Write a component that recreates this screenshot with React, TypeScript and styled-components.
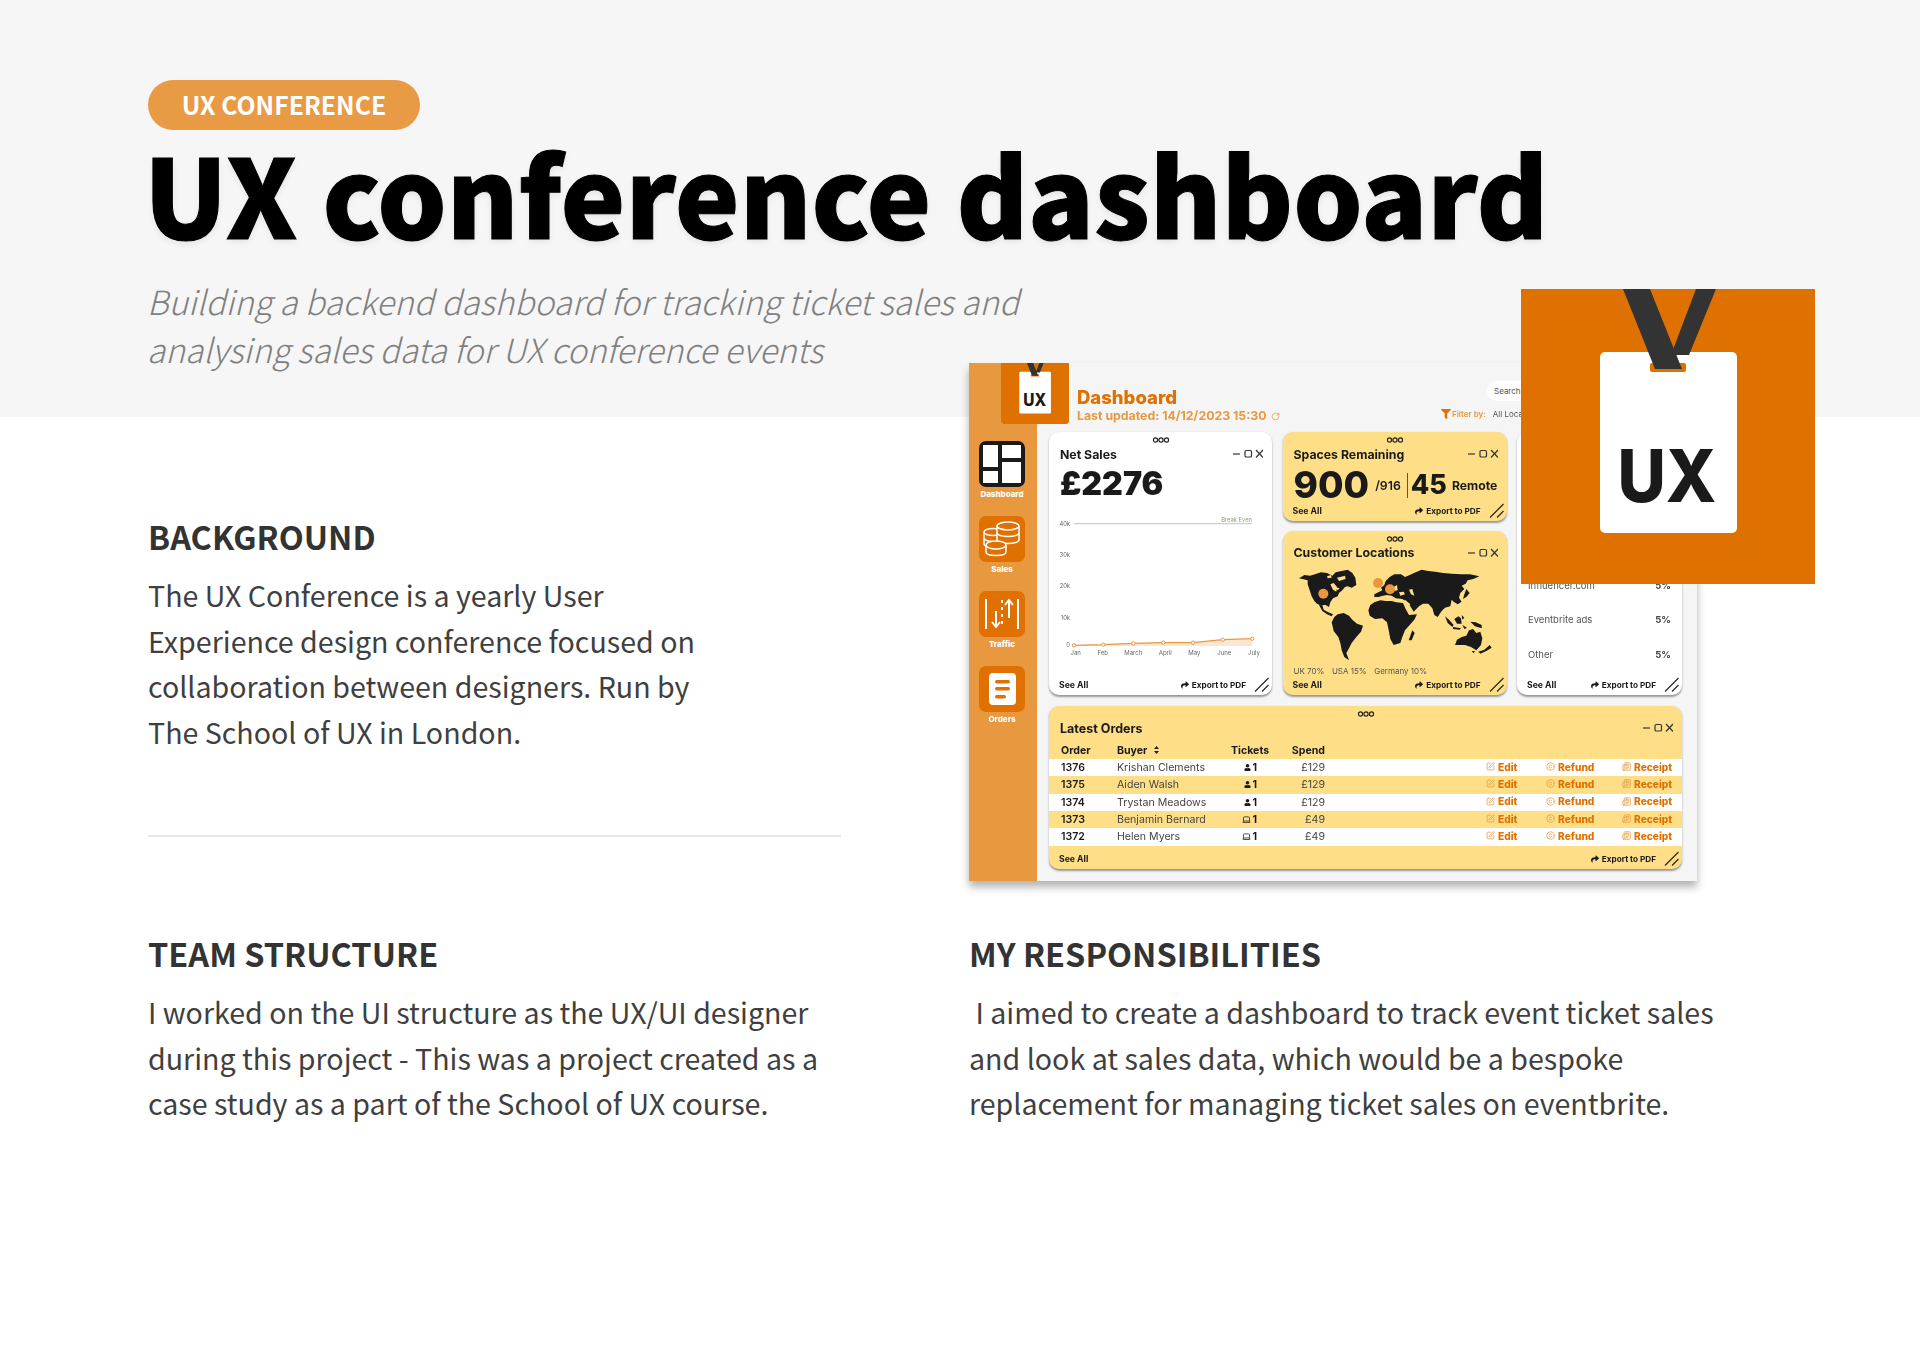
import React from "react";
import styled, { createGlobalStyle } from "styled-components";
import { SquarePen, Copyright, Newspaper, Laptop, RotateCw } from "lucide-react";
import { FaShare, FaFilter, FaUser } from "react-icons/fa";

const Global = createGlobalStyle`
  html, body { margin: 0; padding: 0; background: #fff; }
  * { box-sizing: border-box; }
`;
const SANS = `"Noto Sans CJK SC", "Open Sans", sans-serif`;
const UI = `Inter, "Liberation Sans", sans-serif`;

const Page = styled.div`width: 1920px; height: 1357px; overflow: hidden; font-family: ${SANS}; color: #333;`;
const Hero = styled.header`height: 417px; background: #f6f6f6; padding: 80px 0 0 148px;`;
const Tag = styled.div`
  width: 272px; height: 50px; border-radius: 25px; background: #e89a45; color: #fff; padding-bottom: 2px;
  display: flex; align-items: center; justify-content: center; font-size: 24.8px; font-weight: 700; line-height: 1;
`;
const Title = styled.h1`
  margin: 1px 0 0 -4px; font-size: 109px; line-height: 122px; font-weight: 900; color: #000; white-space: nowrap;
  -webkit-text-stroke: 1px #000; text-shadow: 0 3px 6px rgba(0,0,0,.08);
`;
const Sub = styled.p`
  margin: 24px 0 0 -1px; font-size: 33.3px; line-height: 48px; font-style: italic; font-weight: 300; color: #808080; white-space: nowrap;
`;
const Body = styled.main`
  display: grid; grid-template-columns: 693px 800px; column-gap: 128px; padding-left: 148px;
  grid-template-rows: 514px auto;
`;
const Section = styled.section<{ $pad?: number }>`padding-top: ${(p) => p.$pad ?? 0}px;`;
const Heading = styled.h2`margin: 0; font-size: 32.5px; line-height: 44px; font-weight: 700; color: #333;`;
const Text = styled.p<{ $w: number }>`
  margin: 14px 0 0; font-size: 28.6px; line-height: 45.6px; font-weight: 400; color: #3f3f3f; max-width: ${(p) => p.$w}px;
`;
const Divider = styled.hr`margin: 81px 0 0; border: 0; height: 2px; background: #e8e8e8;`;

const DashWrap = styled.div`position: relative; margin-top: -54px; height: 518px;`;
const Shell = styled.div`
  position: relative; width: 728px; height: 518px; display: flex; background: #f5f5f5;
  box-shadow: 0 6px 8px rgba(0,0,0,.3); filter: blur(.35px); font-family: ${UI}; color: #1a1a1a;
`;
const Side = styled.nav`
  width: 68px; background: #e8983f; display: flex; flex-direction: column; align-items: center; padding: 78px 2px 0 0;
`;
const SideItem = styled.div`width: 46px; height: 75px; display: flex; flex-direction: column; align-items: center;`;
const SideBox = styled.div<{ $dark?: boolean }>`
  width: 46px; height: 46px; border-radius: 7px; background: ${(p) => (p.$dark ? "#1a1a1a" : "#e07000")};
  display: flex; align-items: center; justify-content: center;
`;
const SideLabel = styled.span`font-size: 8px; font-weight: 800; color: #fff; margin-top: 2px; line-height: 10px;`;
const LogoBox = styled.div`
  position: absolute; left: 32px; top: 0; width: 68px; height: 61px; background: #e07000; border-radius: 0 0 4px 4px; overflow: hidden;
`;
const Main = styled.div`flex: 1; display: flex; flex-direction: column; padding: 0 15px 12px 12px; min-width: 0;`;
const Top = styled.div`height: 69px; display: flex; justify-content: space-between; padding-left: 28px;`;
const TitleBlock = styled.div`padding-top: 25px;`;
const DashTitle = styled.div`font-size: 18.5px; line-height: 18px; font-weight: 800; color: #e07000;`;
const Updated = styled.div`
  font-size: 12.3px; line-height: 14px; font-weight: 700; color: #e8983f; margin-top: 3px; display: flex; align-items: center; gap: 4px; white-space: nowrap;
`;
const Tools = styled.div`width: 241px; padding-top: 18px; display: flex; flex-direction: column; align-items: flex-start;`;
const SearchPill = styled.div`
  margin-left: 46px; height: 20px; width: 100px; border-radius: 10px; background: #fff; font-size: 8px; color: #555; padding: 0 7px; display: flex; align-items: center;
`;
const FilterRow = styled.div`display: flex; align-items: center; gap: 7px; margin-top: 8px; font-size: 8px; color: #555; white-space: nowrap;`;
const FilterLabel = styled.span`display: flex; align-items: center; gap: 1px; color: #e8983f; font-weight: 600;`;

const Cards = styled.div`display: grid; grid-template-columns: 223px 224px 165px; column-gap: 10.5px; height: 263px;`;
const Stack = styled.div`display: flex; flex-direction: column; gap: 10px;`;
const Card = styled.div<{ $yellow?: boolean; $h?: number }>`
  position: relative; display: flex; flex-direction: column; border-radius: 10px; padding: 14px 0 2.5px;
  background: ${(p) => (p.$yellow ? "#fedf87" : "#fff")};
  box-shadow: 0 1.5px 2px rgba(0,0,0,.38);
  ${(p) => (p.$h ? `height: ${p.$h}px;` : "")}
`;
const Grip = styled.svg`position: absolute; top: 5px; left: 50%; transform: translateX(-50%);`;
const CardHead = styled.div`display: flex; justify-content: space-between; align-items: center; padding: 0 9px 0 11px; height: 16px;`;
const CardTitle = styled.div`font-size: 12.3px; font-weight: 700; white-space: nowrap;`;
const Amount = styled.div`font-size: 32.2px; line-height: 34px; font-weight: 900; padding-left: 11px; margin-top: 5px;`;
const ChartSvg = styled.svg`display: block; margin-top: 14px; font-family: ${UI};`;
const Foot = styled.div`
  margin-top: auto; height: 16px; display: flex; align-items: center; padding: 0 3px 0 10px; font-size: 8.7px; font-weight: 700; white-space: nowrap;
`;
const Export = styled.span`margin-left: auto; display: flex; align-items: center; gap: 3px; font-size: 8.2px;`;
const Resize = styled.svg`margin-left: 8px; flex: none;`;
const Numbers = styled.div`display: flex; align-items: center; padding: 0 0 0 11px; margin-top: 8px; height: 30px;`;
const Big = styled.span`font-size: 37px; line-height: 30px; font-weight: 800;`;
const Of = styled.span`font-size: 12.3px; font-weight: 600; margin-left: 6px;`;
const Split = styled.span`width: 1px; height: 25px; background: #555; margin: 0 3px 0 6px;`;
const Mid = styled.span`font-size: 27px; line-height: 30px; font-weight: 800;`;
const Remote = styled.span`font-size: 12.2px; font-weight: 700; margin-left: 5px;`;
const MapSvg = styled.svg`display: block; margin: 4px 0 0 12px; flex: none;`;
const Legend = styled.div`display: flex; gap: 7.5px; padding-left: 11px; font-size: 8px; line-height: 12px; color: #555; white-space: nowrap;`;
const Sources = styled.div`flex: 1; display: flex; flex-direction: column; justify-content: flex-end; gap: 14.5px; padding: 0 11px 12px;`;
const Source = styled.div`display: flex; justify-content: space-between; font-size: 9.5px; height: 20px; line-height: 20px; color: #555;`;
const Pct = styled.span`font-weight: 700; color: #444;`;

const Orders = styled(Card)`margin-top: 11px; height: 163px; padding: 14px 0 2.5px;`;
const OrdersTitle = styled.div`font-size: 12.5px; font-weight: 700;`;
const Row = styled.div<{ $fill?: string; $head?: boolean }>`
  display: grid; grid-template-columns: 56px 114px 50px 44px 161px 60px 76px 1fr; align-items: center; padding-left: 12px;
  height: ${(p) => (p.$head ? 14 : 17.33)}px; background: ${(p) => p.$fill ?? "transparent"}; font-size: 10.6px;
  ${(p) => (p.$head ? "font-weight: 700; margin-top: 7px; margin-bottom: 2px;" : "")}
`;
const OrderNo = styled.span`font-weight: 600;`;
const Buyer = styled.span`color: #444; white-space: nowrap;`;
const SortIcon = styled.svg`margin-left: 7px;`;
const Tickets = styled.span`display: flex; align-items: center; justify-content: flex-end; padding-right: 24px; gap: 1px; font-weight: 700;`;
const Spend = styled.span`text-align: right; color: #444;`;
const Act = styled.span`display: flex; align-items: center; gap: 3px; margin-bottom: 2px; color: #e07000; font-weight: 800; font-size: 10.2px; svg { color: #e8983f; flex: none; }`;
const HeadSpend = styled.span`text-align: right;`;
const BuyerHead = styled.span`display: flex; align-items: center;`;

const Tile = styled.div`position: absolute; left: 552px; top: -74px; width: 294px; height: 295px; z-index: 2;`;
const LogoSvg = styled.svg`display: block; font-family: ${UI};`;

const Logo = ({ w, h, vb }: { w: number; h: number; vb: string }) => (
  <LogoSvg width={w} height={h} viewBox={vb}>
    <rect x="0" y="-40" width="294" height="340" fill="#df7100" />
    <rect x="79" y="63" width="137" height="181" rx="5" fill="#fff" />
    <polygon points="175,0 195,0 168,66 150,66" fill="#333" />
    <rect x="129" y="74" width="36" height="9" rx="2" fill="#df7100" />
    <polygon points="102,0 129,0 161,80 134,80" fill="#333" />
    <text x="146" y="213" textAnchor="middle" fontSize="73" fontWeight="800" fill="#1a1a1a" textLength="99" lengthAdjust="spacingAndGlyphs">UX</text>
  </LogoSvg>
);
const Dots = () => (
  <Grip width="17" height="6" viewBox="0 0 17 6" fill="none" stroke="#222" strokeWidth="1.2">
    <circle cx="3" cy="3" r="2.1" /><circle cx="8.5" cy="3" r="2.1" /><circle cx="14" cy="3" r="2.1" />
  </Grip>
);
const Win = () => (
  <svg width="30" height="10" viewBox="0 0 30 10" fill="none" stroke="#333" strokeWidth="1.2">
    <path d="M0 5h7" /><rect x="12" y="1.5" width="6.5" height="6.5" rx="1.3" /><path d="M23 1l7 7.5M30 1l-7 7.5" />
  </svg>
);
const Footer = () => (
  <Foot>
    See All
    <Export><FaShare size={8} />Export to PDF</Export>
    <Resize width="15" height="15" viewBox="0 0 15 15" fill="none" stroke="#222" strokeWidth="1.1">
      <path d="M1 14.5 14.5 1M8 14.5l6.5-6.5" />
    </Resize>
  </Foot>
);

const months = [[26.7, "Jan"], [53.7, "Feb"], [84.3, "March"], [116.3, "April"], [145.3, "May"], [175.3, "June"], [205, "July"]] as const;
const pts = [[25, 130.3], [54.3, 129.7], [84.3, 128.3], [114.3, 127.7], [144, 127.7], [173.7, 124.7], [203.3, 123.7]];
const Chart = () => (
  <ChartSvg width="223" height="150" viewBox="0 0 223 150">
    {[[8.7, "40k"], [40, "30k"], [71.3, "20k"], [102.7, "10k"], [130.3, "0"]].map(([y, t]) => (
      <text key={t} x="21" y={Number(y) + 2} textAnchor="end" fontSize="5.8" fill="#666">{t}</text>
    ))}
    <line x1="25" y1="8.7" x2="203" y2="8.7" stroke="#bccaa6" strokeWidth="1" />
    <text x="203" y="6.5" textAnchor="end" fontSize="5.8" fill="#8aa070">Break Even</text>
    <polygon points={`25,130.3 ${pts.map((p) => p.join(",")).join(" ")} 203.3,131 25,131`} fill="#fbe6d2" />
    <polyline points={pts.map((p) => p.join(",")).join(" ")} fill="none" stroke="#e8983f" strokeWidth="1.2" />
    {pts.map(([x, y]) => <circle key={x} cx={x} cy={y} r="1.7" fill="#fff" stroke="#e8983f" strokeWidth="1" />)}
    {months.map(([x, t]) => <text key={t} x={x} y="140" textAnchor="middle" fontSize="6" fill="#666">{t}</text>)}
  </ChartSvg>
);
const land = [
  // North America with Greenland and Arctic islands
  "M12 40 28 30 45 32 60 28 78 22 96 24 112 32 122 22 140 18 158 14 172 24 181 38 184 60 170 68 158 64 150 66 142 76 132 84 128 94 114 100 106 112 102 126 92 120 78 120 66 116 58 108 50 94 44 76 38 58 38 46 22 42Z",
  // Central America
  "M70 116 82 120 86 134 100 142 114 148 110 154 96 148 82 138Z",
  // South America
  "M110 172 118 156 128 148 146 144 162 152 172 164 186 176 204 182 198 200 184 216 170 234 162 250 154 264 162 286 148 276 140 256 136 234 130 216 116 198Z",
  // Eurasia
  "M238 88 250 82 262 76 258 68 268 60 272 48 284 36 298 28 318 28 330 36 344 30 362 22 380 14 400 18 420 20 445 24 470 26 500 28 525 28 553 34 535 42 518 46 512 56 500 62 508 72 496 84 492 98 500 110 488 118 476 110 470 104 466 124 450 128 440 138 428 156 418 150 412 130 400 116 384 116 372 124 356 140 346 124 336 112 322 102 302 100 290 92 276 90 264 92 250 96 238 96Z",
  // Arabia notch + Africa
  "M220 136 226 120 238 112 256 106 272 108 290 108 304 112 324 114 332 132 342 150 366 148 358 164 344 180 330 196 322 216 316 234 296 240 286 222 282 200 276 172 262 160 240 162 224 152Z",
  // Madagascar
  "M352 196 359 204 350 226 341 226Z",
  // Indonesia & Philippines
  "M450 154 462 164 476 180 472 186 458 174ZM478 162 490 154 498 160 500 176 486 176ZM526 170 542 172 560 180 560 190 540 184ZM502 180 516 188 508 192ZM474 186 498 190 494 194 474 192ZM500 150 508 158 502 164Z",
  // Australia
  "M480 240 486 224 500 216 514 212 522 196 534 192 544 204 556 200 562 220 558 240 544 256 528 246 510 240Z",
  // New Zealand, Tasmania, Japan
  "M550 260 568 254 584 240 590 248 574 258 556 266ZM530 258 540 258 536 265ZM514 72 524 84 514 96 504 102 508 88Z",
];
const lakes = [
  "M106 58 116 54 126 66 124 80 114 74ZM96 34 108 30 110 38 98 40ZM126 38 150 32 152 42 132 48ZM118 66 134 70 128 76Z",
  "M312 82 326 80 330 88 316 92ZM296 66 306 60 308 76 298 78ZM342 74 352 72 358 92 348 88ZM330 104 346 118 342 122 328 108Z",
];
const WorldMap = () => (
  <MapSvg width="200" height="100" viewBox="0 0 600 300">
    <g fill="#1a1a1a">{land.map((d, i) => <path key={i} d={d} />)}</g>
    <g fill="#fedf87">{lakes.map((d, i) => <path key={i} d={d} />)}</g>
    <g fill="#e8983f">
      <circle cx="85" cy="86" r="15" /><circle cx="249" cy="54" r="15" /><circle cx="285" cy="73" r="15" />
    </g>
  </MapSvg>
);

const rows = [
  ["1376", "Krishan Clements", "p", "£129"], ["1375", "Aiden Walsh", "p", "£129"], ["1374", "Trystan Meadows", "p", "£129"],
  ["1373", "Benjamin Bernard", "l", "£49"], ["1372", "Helen Myers", "l", "£49"],
];

export default function App() {
  return (
    <Page>
      <Global />
      <Hero>
        <Tag>UX CONFERENCE</Tag>
        <Title>UX conference dashboard</Title>
        <Sub>Building a backend dashboard for tracking ticket sales and<br />analysing sales data for UX conference events</Sub>
      </Hero>
      <Body>
        <Section $pad={97}>
          <Heading>BACKGROUND</Heading>
          <Text $w={570}>The UX Conference is a yearly User Experience design conference focused on collaboration between designers. Run by The School of UX in London.</Text>
          <Divider />
        </Section>
        <DashWrap>
          <Shell>
            <Side>
              <SideItem>
                <SideBox $dark>
                  <svg width="38" height="38" viewBox="0 0 38 38" fill="#fff">
                    <rect x="0" y="0" width="15" height="22" /><rect x="19" y="0" width="19" height="13" /><rect x="19" y="17" width="19" height="21" /><rect x="0" y="26" width="15" height="12" />
                  </svg>
                </SideBox>
                <SideLabel>Dashboard</SideLabel>
              </SideItem>
              <SideItem>
                <SideBox>
                  <svg width="38" height="36" viewBox="0 0 38 36" fill="#e07000" stroke="#fff" strokeWidth="1.5">
                    <path d="M1 11v12c0 2 4 3.5 9 3.5s9-1.5 9-3.5V11" /><ellipse cx="10" cy="11" rx="9" ry="3.5" /><path d="M1 17c0 2 4 3.5 9 3.5" />
                    <path d="M14 5v14c0 2 5 3.5 11 3.5s11-1.5 11-3.5V5" /><ellipse cx="25" cy="5" rx="11" ry="4" /><path d="M14 12c0 2 5 3.5 11 3.5s11-1.5 11-3.5" />
                    <path d="M3 24v7c0 2 4 3.5 10 3.5s10-1.5 10-3.5v-7" /><ellipse cx="13" cy="24" rx="10" ry="4" />
                  </svg>
                </SideBox>
                <SideLabel>Sales</SideLabel>
              </SideItem>
              <SideItem>
                <SideBox>
                  <svg width="36" height="34" viewBox="0 0 36 34" fill="none" stroke="#fff" strokeWidth="2">
                    <path d="M2 2v30M34 2v30" />
                    <path d="M12 14v16M8 25l4 5 4-5" /><path d="M18 3v28" strokeDasharray="3 4" /><path d="M25 3v18M21 8l4-5 4 5" />
                  </svg>
                </SideBox>
                <SideLabel>Traffic</SideLabel>
              </SideItem>
              <SideItem>
                <SideBox>
                  <svg width="27" height="32" viewBox="0 0 27 32">
                    <rect width="27" height="32" rx="4" fill="#fff" />
                    <rect x="6" y="7" width="15" height="3.5" rx="1.7" fill="#e07000" /><rect x="6" y="14" width="15" height="3.5" rx="1.7" fill="#e07000" /><rect x="6" y="22" width="11" height="3.5" rx="1.7" fill="#e07000" />
                  </svg>
                </SideBox>
                <SideLabel>Orders</SideLabel>
              </SideItem>
            </Side>
            <LogoBox><Logo w={68} h={61} vb="0 25 294 264" /></LogoBox>
            <Main>
              <Top>
                <TitleBlock>
                  <DashTitle>Dashboard</DashTitle>
                  <Updated>Last updated: 14/12/2023 15:30 <RotateCw size={9} /></Updated>
                </TitleBlock>
                <Tools>
                  <SearchPill>Search</SearchPill>
                  <FilterRow><FilterLabel><FaFilter size={10} color="#e07000" />Filter by:</FilterLabel>All Locations</FilterRow>
                </Tools>
              </Top>
              <Cards>
                <Card>
                  <Dots />
                  <CardHead><CardTitle>Net Sales</CardTitle><Win /></CardHead>
                  <Amount>£2276</Amount>
                  <Chart />
                  <Footer />
                </Card>
                <Stack>
                  <Card $yellow $h={89}>
                    <Dots />
                    <CardHead><CardTitle>Spaces Remaining</CardTitle><Win /></CardHead>
                    <Numbers><Big>900</Big><Of>/916</Of><Split /><Mid>45</Mid><Remote>Remote</Remote></Numbers>
                    <Footer />
                  </Card>
                  <Card $yellow $h={164}>
                    <Dots />
                    <CardHead><CardTitle>Customer Locations</CardTitle><Win /></CardHead>
                    <WorldMap />
                    <Legend><span>UK 70%</span><span>USA 15%</span><span>Germany 10%</span></Legend>
                    <Footer />
                  </Card>
                </Stack>
                <Card>
                  <Sources>
                    <Source>Influencer.com<Pct>5%</Pct></Source>
                    <Source>Eventbrite ads<Pct>5%</Pct></Source>
                    <Source>Other<Pct>5%</Pct></Source>
                  </Sources>
                  <Footer />
                </Card>
              </Cards>
              <Orders $yellow>
                <Dots />
                <CardHead><OrdersTitle>Latest Orders</OrdersTitle><Win /></CardHead>
                <Row $head>
                  <span>Order</span>
                  <BuyerHead>Buyer<SortIcon width="5" height="8" viewBox="0 0 5 8" fill="#222"><path d="M2.5 0 5 3H0ZM2.5 8 0 5h5Z" /></SortIcon></BuyerHead>
                  <span>Tickets</span>
                  <HeadSpend>Spend</HeadSpend>
                </Row>
                {rows.map(([no, name, kind, price], i) => (
                  <Row key={no} $fill={i % 2 ? "#fedf87" : "#fff"}>
                    <OrderNo>{no}</OrderNo>
                    <Buyer>{name}</Buyer>
                    <Tickets>{kind === "p" ? <FaUser size={7} /> : <Laptop size={9} />}1</Tickets>
                    <Spend>{price}</Spend>
                    <span />
                    <Act><SquarePen size={9} />Edit</Act>
                    <Act><Copyright size={9} />Refund</Act>
                    <Act><Newspaper size={9} />Receipt</Act>
                  </Row>
                ))}
                <Footer />
              </Orders>
            </Main>
          </Shell>
          <Tile><Logo w={294} h={295} vb="0 0 294 295" /></Tile>
        </DashWrap>
        <Section>
          <Heading>TEAM STRUCTURE</Heading>
          <Text $w={693}>I worked on the UI structure as the UX/UI designer during this project - This was a project created as a case study as a part of the School of UX course.</Text>
        </Section>
        <Section>
          <Heading>MY RESPONSIBILITIES</Heading>
          <Text $w={760}>&nbsp;I aimed to create a dashboard to track event ticket sales and look at sales data, which would be a bespoke replacement for managing ticket sales on eventbrite.</Text>
        </Section>
      </Body>
    </Page>
  );
}
